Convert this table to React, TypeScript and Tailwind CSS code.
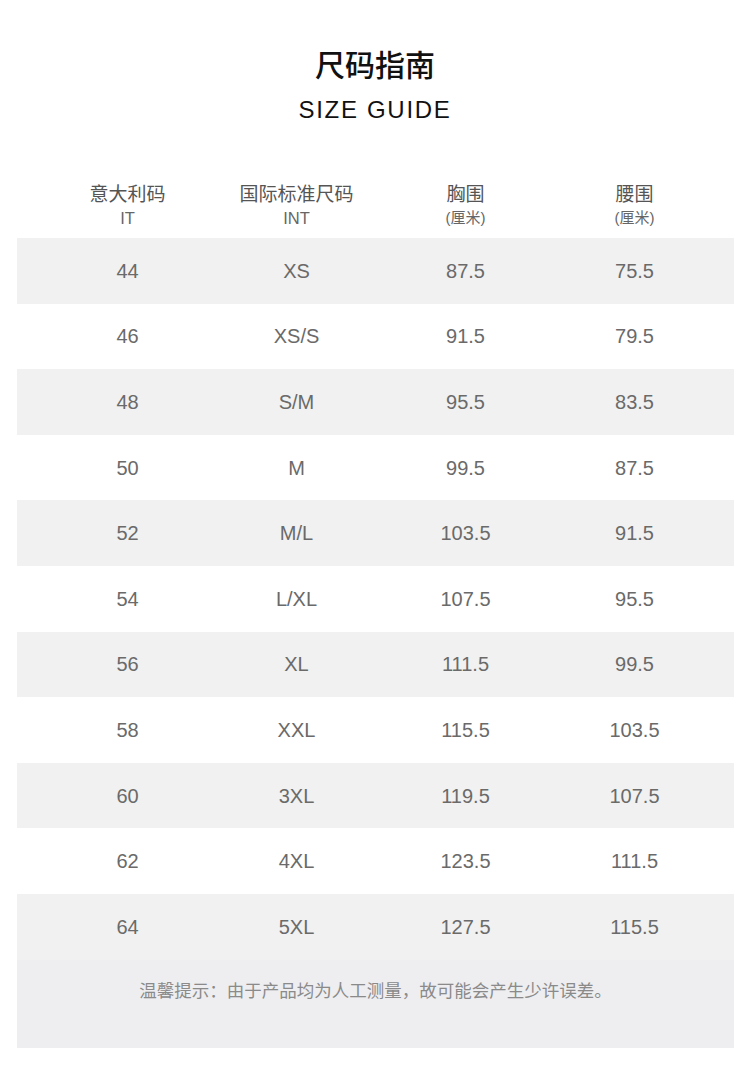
import React from "react";

const rows: [string, string, string, string][] = [
  ["44", "XS", "87.5", "75.5"],
  ["46", "XS/S", "91.5", "79.5"],
  ["48", "S/M", "95.5", "83.5"],
  ["50", "M", "99.5", "87.5"],
  ["52", "M/L", "103.5", "91.5"],
  ["54", "L/XL", "107.5", "95.5"],
  ["56", "XL", "111.5", "99.5"],
  ["58", "XXL", "115.5", "103.5"],
  ["60", "3XL", "119.5", "107.5"],
  ["62", "4XL", "123.5", "111.5"],
  ["64", "5XL", "127.5", "115.5"],
];

const cjk = "font-['Liberation_Sans','Noto_Sans_CJK_SC',sans-serif]";

export default function App() {
  const headers: [string, string][] = [
    ["意大利码", "IT"],
    ["国际标准尺码", "INT"],
    ["胸围", "(厘米)"],
    ["腰围", "(厘米)"],
  ];
  return (
    <div className={`w-[750px] h-[1080px] bg-white ${cjk}`}>
      <div className="pt-[43px] flex flex-col items-center">
        <div className="h-[40px] leading-[40px] text-[30px] font-medium text-[#111] font-['Noto_Sans_CJK_SC',sans-serif]">
          尺码指南
        </div>
        <div className="mt-[12px] h-[30px] leading-[30px] text-[24px] tracking-[1.7px] text-[#111] font-['Liberation_Sans',sans-serif]">
          SIZE GUIDE
        </div>
      </div>
      <div className="mt-[45px] mx-[17px] w-[717px]">
        <div className="h-[68px] flex pl-[26px] pt-[10px]">
          {headers.map(([a, b], i) => (
            <div key={i} className="w-[169px] flex flex-col items-center">
              <div className="h-[26px] leading-[26px] text-[19px] text-[#555] font-['Noto_Sans_CJK_SC',sans-serif]">
                {a}
              </div>
              <div
                className={`mt-[1px] h-[22px] leading-[22px] text-[#666] ${
                  i >= 2
                    ? "text-[15px] font-['Liberation_Sans','Noto_Sans_CJK_SC',sans-serif]"
                    : "text-[16.5px] font-['Liberation_Sans',sans-serif]"
                }`}
              >
                {b}
              </div>
            </div>
          ))}
        </div>
        {rows.map((r, i) => (
          <div
            key={i}
            className={`h-[65.6px] flex items-center pl-[26px] ${
              i % 2 === 0 ? "bg-[#f1f1f1]" : "bg-white"
            }`}
          >
            {r.map((c, j) => (
              <div
                key={j}
                className="w-[169px] text-center text-[20px] text-[#6a6a6a] font-['Liberation_Sans',sans-serif]"
              >
                {c}
              </div>
            ))}
          </div>
        ))}
        <div className="h-[88px] bg-[#eeeef0] flex justify-center pt-[17px]">
          <div className="h-[26px] leading-[26px] text-[17.5px] text-[#8a8a8a] font-['Noto_Sans_CJK_SC',sans-serif]">
            温馨提示：由于产品均为人工测量，故可能会产生少许误差。
          </div>
        </div>
      </div>
    </div>
  );
}
